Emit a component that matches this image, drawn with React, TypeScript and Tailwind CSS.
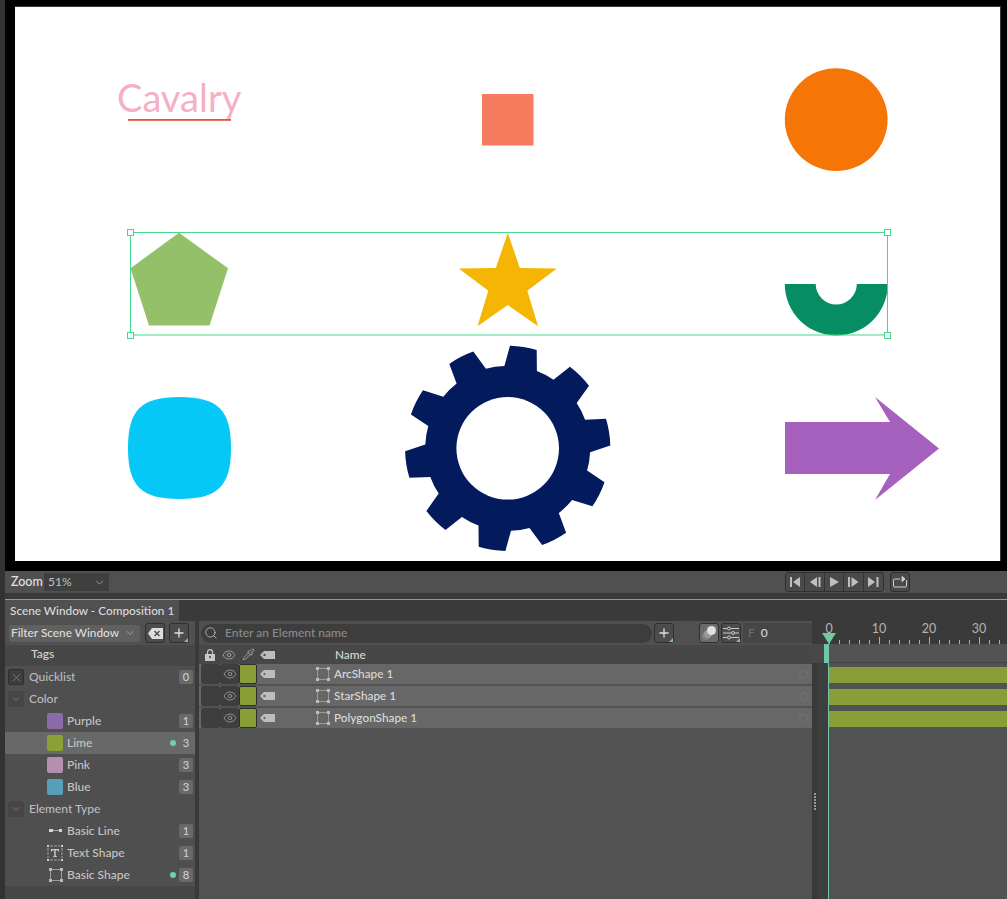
import { Eye, Pipette, Search, Plus, X, ChevronDown } from "lucide-react";
import type { ReactNode } from "react";

const FONT = "font-['Lato',sans-serif]";

function gearPath(cx: number, cy: number) {
  const pt = (r: number, deg: number) => {
    const a = (deg * Math.PI) / 180;
    return `${(cx + r * Math.sin(a)).toFixed(1)} ${(cy - r * Math.cos(a)).toFixed(1)}`;
  };
  let d = "";
  for (let i = 0; i < 10; i++) {
    const o = i * 36;
    d += `${i === 0 ? "M" : "L"}${pt(82.5, o - 2.3)} L${pt(102.6, o + 1.3)} A102.6 102.6 0 0 1 ${pt(102.6, o + 16.4)} L${pt(82.5, o + 20.7)} A82.5 82.5 0 0 1 ${pt(82.5, o + 33.7)} `;
  }
  return d + "Z";
}

function starPoints(cx: number, cy: number, R: number, r: number) {
  const pts: string[] = [];
  for (let i = 0; i < 10; i++) {
    const a = (i * 36 * Math.PI) / 180;
    const rad = i % 2 === 0 ? R : r;
    pts.push(`${(cx + rad * Math.sin(a)).toFixed(1)},${(cy - rad * Math.cos(a)).toFixed(1)}`);
  }
  return pts.join(" ");
}

function Artboard() {
  const corners = [
    [130.5, 232.5],
    [887.5, 232.5],
    [130.5, 335.5],
    [887.5, 335.5],
  ];
  return (
    <svg viewBox="5 0 1002 571" className="block h-[571px] w-[1002px]">
      <rect x="5" y="0" width="1002" height="571" fill="#000" />
      <rect x="15" y="6" width="986" height="555" fill="#3a3a3a" />
      <rect x="15" y="7" width="985" height="554" fill="#fff" />

      <text x="117" y="112" fontFamily="Lato" fontWeight="400" fontSize="38" fill="#f5b0c6">
        Cavalry
      </text>
      <rect x="128" y="119" width="103" height="1.8" fill="#ef4a3e" />

      <rect x="482" y="94" width="51.5" height="51.5" fill="#f47b5d" />
      <circle cx="836.2" cy="119.6" r="51.4" fill="#f57506" />

      <polygon points="179,232.8 228,268.2 209.5,325.5 149,325.5 130.5,268.2" fill="#95c06a" />
      <polygon points={starPoints(507.8, 284.5, 51.5, 20.5)} fill="#f4b602" />
      <path d="M784.8 284 H887.8 A51.5 51.5 0 0 1 784.8 284 Z M815.7 284 A20.5 20.5 0 0 0 856.8 284 Z" fill="#068d63" fillRule="evenodd" />

      <path
        d="M179.5 397 C218 397 231 410 231 448 C231 486 218 499 179.5 499 C141 499 128 486 128 448 C128 410 141 397 179.5 397 Z"
        fill="#05c8f6"
      />
      <path d={gearPath(507.7, 448.3)} fill="#031a5c" />
      <circle cx="507.7" cy="448.3" r="51.3" fill="#fff" />
      <polygon points="785,422 890,422 875,397 939,448.5 875,500 890,474 785,474" fill="#a561bd" />

      <rect x="130.5" y="232.5" width="757" height="102.5" fill="none" stroke="#44d98a" strokeWidth="1" />
      {corners.map(([x, y]) => (
        <rect key={`${x}-${y}`} x={x - 3} y={y - 3} width="6" height="6" fill="#fff" stroke="#44d98a" strokeWidth="1" />
      ))}
    </svg>
  );
}

function ToolButton({ children, className = "", corner }: { children: ReactNode; className?: string; corner?: boolean }) {
  return (
    <div className={`relative flex h-[20px] w-[20px] shrink-0 items-center justify-center rounded-[3px] border border-[#2f2f2f] bg-[#4c4c4c] text-[#dddddd] ${className}`}>
      {children}
      {corner && (
        <svg className="absolute right-0 bottom-0" width="4" height="4" viewBox="0 0 4 4">
          <polygon points="4,0 4,4 0,4" fill="#6fc8a8" />
        </svg>
      )}
    </div>
  );
}

function Transport() {
  const icons = [
    <path key="a" d="M1 1h2v10H1z M11 1v10L4 6z" />,
    <path key="b" d="M8 1v10L1 6z M9.500 1h2v10h-2z" />,
    <path key="c" d="M2 1l9 5-9 5z" />,
    <path key="d" d="M1 1h2v10H1z M4.500 1l7 5-7 5z" />,
    <path key="e" d="M1 1l7 5-7 5z M9.500 1h2v10h-2z" />,
  ];
  return (
    <div className="flex items-center">
      <div className="flex h-[20px] overflow-hidden rounded-[3px] border border-[#2f2f2f]">
        {icons.map((p, i) => (
          <div key={i} className="flex w-[19.4px] items-center justify-center border-r border-[#333333] bg-[#4a4a4a] last:border-r-0">
            <svg width="12" height="12" viewBox="0 0 12 12" fill="#c0c0c0">
              {p}
            </svg>
          </div>
        ))}
      </div>
      <div className="ml-[6px] flex h-[20px] w-[20px] items-center justify-center rounded-[3px] border border-[#2f2f2f] bg-[#4a4a4a]">
        <svg width="16" height="12" viewBox="0 0 16 12" fill="none" stroke="#d0d0d0" strokeWidth="1">
          <path d="M8 3H2.500a1 1 0 0 0-1 1v6a1 1 0 0 0 1 1h11a1 1 0 0 0 1-1V4" />
          <path d="M10 .5l3 2.500-3 2.500z" fill="#d0d0d0" />
        </svg>
      </div>
    </div>
  );
}

function Swatch({ color }: { color: string }) {
  return <div className="h-[16px] w-[16px] rounded-[2px]" style={{ backgroundColor: color }} />;
}

function ShapeIcon({ size = 14 }: { size?: number }) {
  return (
    <svg width={size} height={size} viewBox="0 0 14 14" fill="none">
      <rect x="1.500" y="1.500" width="11" height="11" stroke="#9a9a9a" strokeWidth="1" />
      <g fill="#bdbdbd">
        <rect x="0" y="0" width="3" height="3" />
        <rect x="11" y="0" width="3" height="3" />
        <rect x="0" y="11" width="3" height="3" />
        <rect x="11" y="11" width="3" height="3" />
      </g>
    </svg>
  );
}

function TagIcon() {
  return (
    <svg width="15" height="8" viewBox="0 0 15 8">
      <path fillRule="evenodd" d="M4 0h11v8H4L0 4z M4.500 2.800a1.200 1.200 0 1 0 .01 0z" fill="#bdbdbd" />
    </svg>
  );
}

function Badge({ n }: { n: number }) {
  return (
    <div className="flex h-[14px] w-[14px] items-center justify-center rounded-[2px] bg-[#696969] text-[11px] font-medium text-[#d0d0d0]">
      {n}
    </div>
  );
}

function TagRow({
  icon,
  label,
  count,
  dot,
  active,
}: {
  icon: ReactNode;
  label: string;
  count: number;
  dot?: boolean;
  active?: boolean;
}) {
  return (
    <div className={`flex h-[22px] items-center pr-[2px] pl-[42px] ${active ? "bg-[#686868]" : ""}`}>
      <div className="flex w-[20px] shrink-0 items-center justify-start">{icon}</div>
      <span className="flex-1 text-[12px] font-medium text-[#c4c4c4]">{label}</span>
      {dot && <span className="mr-[3px] h-[6px] w-[6px] rounded-full bg-[#6fcfae]" />}
      <Badge n={count} />
    </div>
  );
}

function GroupRow({ label, box, count, boxClass = "bg-[#464646]" }: { label: string; box: ReactNode; count?: number; boxClass?: string }) {
  return (
    <div className="flex h-[22px] items-center pr-[2px] pl-[3px]">
      <div className={`flex h-[16px] w-[16px] items-center justify-center rounded-[2px] text-[#8e8e8e] ${boxClass}`}>{box}</div>
      <span className="ml-[5px] flex-1 text-[12px] font-medium text-[#bcbcbc]">{label}</span>
      {count !== undefined && <Badge n={count} />}
    </div>
  );
}

function TagsPanel() {
  const chevron = <ChevronDown size={12} strokeWidth={1.5} />;
  return (
    <div className="flex w-[190px] shrink-0 flex-col bg-[#464646]">
      <div className="flex h-[24px] items-center bg-[#505050] pr-[6px] pl-[4px]">
        <div className="flex h-[17px] w-[132px] items-center justify-between rounded-[3px] bg-[#606060] pr-[4px] pl-[2px] text-[11.8px] font-medium text-[#dedede]">
          Filter Scene Window
          <ChevronDown size={12} strokeWidth={1.25} className="text-[#c0c0c0]" />
        </div>
        <ToolButton className="ml-[5px]">
          <svg width="15" height="11" viewBox="0 0 15 11">
            <path fillRule="evenodd" fill="#dddddd" d="M4 0h11v11H4L0 5.500z M7 2.500l-1 1 2 2-2 2 1 1 2-2 2 2 1-1-2-2 2-2-1-1-2 2z" />
          </svg>
        </ToolButton>
        <ToolButton className="ml-[4px]" corner>
          <Plus size={14} strokeWidth={2.25} />
        </ToolButton>
      </div>
      <div className="flex h-[18px] items-center bg-[#474747] pl-[26px] text-[12px] font-medium text-[#d6d6d6]">Tags</div>
      <div className="mt-[3px] bg-[#4f4f4f]">
        <GroupRow
          label="Quicklist"
          count={0}
          boxClass="bg-[#3e3e3e] border border-[#2f2f2f]"
          box={<X size={13} strokeWidth={1} className="text-[#a0a0a0]" />}
        />
        <GroupRow label="Color" box={chevron} />
        <TagRow icon={<Swatch color="#8a6ba8" />} label="Purple" count={1} />
        <TagRow icon={<Swatch color="#8ca038" />} label="Lime" count={3} dot active />
        <TagRow icon={<Swatch color="#b58fae" />} label="Pink" count={3} />
        <TagRow icon={<Swatch color="#559fb9" />} label="Blue" count={3} />
        <GroupRow label="Element Type" box={chevron} />
        <TagRow
          icon={
            <svg width="15" height="6" viewBox="0 0 15 6">
              <rect x="2" y="1" width="4" height="3" fill="#d4d4d4" />
              <rect x="6" y="2" width="7" height="1" fill="#a8a8a8" />
              <rect x="12" y="1" width="3" height="3" fill="#d4d4d4" />
            </svg>
          }
          label="Basic Line"
          count={1}
        />
        <TagRow
          icon={
            <svg width="16" height="16" viewBox="0 0 16 16">
              <g fill="#cfcfcf">
                <rect x="0" y="0" width="2" height="2" />
                <rect x="14" y="0" width="2" height="2" />
                <rect x="0" y="14" width="2" height="2" />
                <rect x="14" y="14" width="2" height="2" />
                <path d="M4 4h8v2.500h-1.200v-1.200H8.700v6h1.300V12H6v-.7h1.300v-6H5.200v1.200H4z" />
              </g>
              <path d="M1 3v10M15 3v10M3 1h10M3 15h10" stroke="#a0a0a0" strokeWidth="1" strokeDasharray="3 1" />
            </svg>
          }
          label="Text Shape"
          count={1}
        />
        <TagRow
          icon={
            <div className="ml-[2px]">
              <ShapeIcon />
            </div>
          }
          label="Basic Shape"
          count={8}
          dot
        />
      </div>
    </div>
  );
}

function ElementRow({ name }: { name: string }) {
  return (
    <div className="flex h-[20px] items-center bg-[#676767] pl-[2px]">
      <div className="h-[20px] w-[19px] rounded-[2px] bg-[#3e3e3e]" />
      <div className="flex h-[20px] w-[19px] items-center justify-center rounded-[2px] bg-[#3e3e3e]">
        <Eye size={14} strokeWidth={1.25} className="text-[#a8a8a8]" />
      </div>
      <div className="h-[20px] w-[18px] rounded-[2px] border border-[#2e2e2e] bg-[#8a9e38]" />
      <div className="ml-[3px] flex w-[15px] items-center">
        <TagIcon />
      </div>
      <div className="ml-[41px]">
        <ShapeIcon />
      </div>
      <span className="ml-[4px] flex-1 text-[11.8px] font-medium text-[#dadada]">{name}</span>
      <span className="mr-[4px] h-[9px] w-[9px] rounded-full border border-[#737373]" />
    </div>
  );
}

function ElementsPanel() {
  return (
    <div className="flex w-[613px] shrink-0 flex-col bg-[#525252]">
      <div className="flex h-[24px] items-center bg-[#505050] pl-[2px]">
        <div className="flex h-[19px] w-[451px] items-center rounded-full bg-[#3d3d3d] pl-[3px] text-[12px] font-medium text-[#8c8c8c]">
          <Search size={14} strokeWidth={1.25} className="mr-[7px] text-[#d0d0d0]" />
          Enter an Element name
        </div>
        <ToolButton className="ml-[2px]" corner>
          <Plus size={14} strokeWidth={2.25} />
        </ToolButton>
        <ToolButton className="ml-[25px] bg-[#6a6a6a]">
          <svg width="16" height="16" viewBox="0 0 16 16">
            <circle cx="5" cy="11" r="4" fill="#808080" />
            <circle cx="7" cy="9" r="4" fill="#9a9a9a" />
            <circle cx="10.500" cy="5.500" r="4.500" fill="#e0e0e0" />
          </svg>
        </ToolButton>
        <ToolButton className="ml-[2px]" corner>
          <svg width="16" height="14" viewBox="0 0 16 14" fill="none" stroke="#c8c8c8" strokeWidth="1">
            <path d="M0 2.500h4M8 2.500h8M0 7h8M12 7h4M0 11.500h4M8 11.500h8" />
            <circle cx="6" cy="2.500" r="1.500" />
            <circle cx="10" cy="7" r="1.500" />
            <circle cx="6" cy="11.500" r="1.500" />
          </svg>
        </ToolButton>
        <div className="ml-[2px] flex h-[20px] w-[69px] items-center bg-[#464646] pl-[5px] text-[12px] font-medium">
          <span className="text-[#6e6e6e]">F</span>
          <span className="ml-[6px] text-[#d8d8d8]">0</span>
        </div>
      </div>
      <div className="flex h-[19px] items-center bg-[#474747] pl-[6px] text-[#b4b4b4]">
        <svg width="10" height="12" viewBox="0 0 10 12">
          <path d="M2.500 5V3.200a2.500 2.500 0 0 1 5 0V5" fill="none" stroke="#c8c8c8" strokeWidth="1.200" />
          <path fillRule="evenodd" d="M0 5h10v7H0z M5 7a1 1 0 1 0 .01 0z" fill="#c8c8c8" />
        </svg>
        <Eye size={14} strokeWidth={1.25} className="ml-[7px]" />
        <Pipette size={13} strokeWidth={1.5} className="ml-[6px]" />
        <div className="ml-[5px] flex w-[15px] items-center">
          <TagIcon />
        </div>
        <span className="ml-[60px] text-[11.8px] font-medium text-[#dadada]">Name</span>
      </div>
      <div className="flex flex-col gap-[2px]">
        <ElementRow name="ArcShape 1" />
        <ElementRow name="StarShape 1" />
        <ElementRow name="PolygonShape 1" />
      </div>
    </div>
  );
}

function Ruler() {
  const ticks = Array.from({ length: 19 }, (_, i) => i * 10 + 1);
  const labels = [0, 10, 20, 30];
  return (
    <svg width="179" height="23" viewBox="0 0 179 23" className="block overflow-visible">
      {ticks.map((x, i) => (
        <rect key={x} x={x} y={i % 5 === 0 ? 16 : 19} width="1" height={i % 5 === 0 ? 7 : 4} fill="#b0b0b0" />
      ))}
      {labels.map((n, i) => (
        <text key={n} x={i * 50 + 1} y="11.500" textAnchor="middle" fontFamily="Lato" fontSize="12.500" fill="#b4b4b4">
          {n}
        </text>
      ))}
    </svg>
  );
}

function Timeline() {
  return (
    <div className="relative flex flex-1 bg-[#525252]">
      <div className="flex w-[16px] shrink-0 flex-col">
        <div className="h-[23px] bg-[#3a3a3a]" />
        <div className="h-[19px] bg-[#484848]" />
        <div className="relative flex-1 bg-[#3e3e3e]">
          <div className="h-full w-[6px] bg-[#393939]" />
          <div className="absolute top-[130px] left-[2px] flex flex-col gap-[1px]">
            {[0, 1, 2, 3, 4, 5].map((i) => (
              <span key={i} className="h-[2px] w-[2px] bg-[#9a9a9a]" />
            ))}
          </div>
        </div>
      </div>
      <div className="flex flex-1 flex-col">
        <div className="h-[23px] bg-[#3a3a3a]">
          <Ruler />
        </div>
        <div className="h-[18px] bg-[#535353]" />
        <div className="h-[1px] bg-[#444444]" />
        <div className="flex flex-col gap-[6px] pt-[4px] pl-[1px]">
          <div className="h-[16px] bg-[#8a9e38]" />
          <div className="h-[16px] bg-[#8a9e38]" />
          <div className="h-[16px] bg-[#8a9e38]" />
        </div>
      </div>
      {/* playhead sits over ruler and tracks */}
      <div className="absolute top-[42px] bottom-0 left-[16px] w-[1px] bg-[#6fc8a8]" />
      <div className="absolute top-[23px] left-[12px] h-[19px] w-[5px] bg-[#6fc8a8]" />
      <svg className="absolute top-[12px] left-[10px]" width="14" height="11" viewBox="0 0 14 11">
        <polygon points="0,0 14,0 7,11" fill="#6fc8a8" />
      </svg>
    </div>
  );
}

export default function App() {
  return (
    <div className={`flex h-[899px] w-[1007px] overflow-hidden bg-[#333333] ${FONT}`}>
      <div className="w-[5px] shrink-0 bg-[#333333]" />
      <div className="flex w-[1002px] flex-col">
        <Artboard />
        <div className="flex h-[22px] items-center bg-[#505050] pl-[6px] text-[12px]">
          <span className="w-[33px] text-[12.5px] font-medium text-[#e0e0e0]">Zoom</span>
          <div className="flex h-[18px] w-[65px] items-center justify-between bg-[#3f3f3f] pr-[3px] pl-[4px] text-[12px] text-[#c0c0c0]">
            51%
            <ChevronDown size={13} strokeWidth={1.25} />
          </div>
          <div className="ml-[676px]">
            <Transport />
          </div>
        </div>
        <div className="h-[6px] bg-[#3a3a3a]" />
        <div className="h-[1px] bg-[#2fd07a]" />
        <div className="flex h-[21px] bg-[#3a3a3a]">
          <div className="flex w-[174px] items-center bg-[#505050] pl-[5px] text-[11.8px] font-medium text-[#dcdcdc]">
            Scene Window - Composition 1
          </div>
        </div>
        <div className="flex flex-1">
          <TagsPanel />
          <div className="w-[4px] shrink-0 bg-[#3a3a3a]" />
          <ElementsPanel />
          <Timeline />
        </div>
      </div>
    </div>
  );
}
